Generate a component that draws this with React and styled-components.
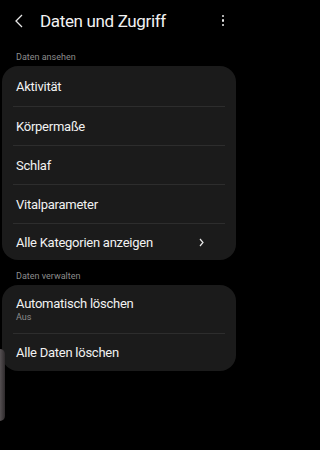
import React from 'react';
import styled, { createGlobalStyle } from 'styled-components';

const GlobalStyle = createGlobalStyle`
  html, body {
    margin: 0;
    padding: 0;
    background: #000;
  }
  body {
    font-family: Roboto, "Noto Sans", "Liberation Sans", sans-serif;
    color: #f2f2f2;
  }
`;

const Screen = styled.div`
  position: relative;
  width: 238px;
  height: 450px;
  overflow: hidden;
  background: #000;
`;

const Header = styled.header`
  display: flex;
  align-items: center;
  height: 41px;
  padding: 0 14px 0 12px;
`;

const BackButton = styled.button`
  display: flex;
  align-items: center;
  justify-content: center;
  width: 14px;
  height: 20px;
  padding: 0;
  margin-right: 14px;
  border: none;
  background: none;
  color: #e8e8e8;
`;

const Title = styled.h1`
  flex: 1;
  margin: 0;
  font-size: 17px;
  font-weight: 400;
  letter-spacing: -0.35px;
  color: #f2f2f2;
`;

const MoreButton = styled.button`
  display: flex;
  flex-direction: column;
  align-items: center;
  gap: 2px;
  padding: 0;
  border: none;
  background: none;
`;

const Dot = styled.span`
  width: 2.5px;
  height: 2.5px;
  border-radius: 50%;
  background: #e8e8e8;
`;

const SectionLabel = styled.div`
  padding: ${(p) => p.$top || 10}px 16px 4px;
  font-size: 9px;
  color: #8c8c8c;
`;

const Card = styled.div`
  margin: 0 2px;
  background: #1b1b1b;
  border-radius: 16px;
  padding: 0 11px;
`;

const Row = styled.div`
  display: flex;
  align-items: center;
  min-height: ${(p) => p.$height || 38}px;
  padding: 0 3px;
  border-top: ${(p) => (p.$first ? 'none' : '1px solid #2d2d2d')};
`;

const RowText = styled.div`
  flex: 1;
  display: flex;
  flex-direction: column;
`;

const RowTitle = styled.span`
  font-size: 13px;
  letter-spacing: -0.25px;
  color: #f2f2f2;
`;

const RowSub = styled.span`
  margin-top: 1px;
  font-size: 9px;
  color: #8c8c8c;
`;

const Chevron = styled.span`
  display: flex;
  margin-right: 18px;
  color: #e8e8e8;
`;

const EdgeHandle = styled.div`
  position: absolute;
  left: 0;
  top: 349px;
  width: 5px;
  height: 72px;
  border-radius: 0 5px 5px 0;
  background: linear-gradient(to right, #555052, #2e2a2c);
`;

const viewItems = ['Aktivität', 'Körpermaße', 'Schlaf', 'Vitalparameter'];

export default function App() {
  return (
    <Screen>
      <GlobalStyle />
      <Header>
        <BackButton aria-label="Zurück">
          <svg width="8" height="14" viewBox="0 0 8 14">
            <path d="M7 1 L1 7 L7 13" fill="none" stroke="currentColor" strokeWidth="1.3" />
          </svg>
        </BackButton>
        <Title>Daten und Zugriff</Title>
        <MoreButton aria-label="Mehr">
          <Dot />
          <Dot />
          <Dot />
        </MoreButton>
      </Header>

      <SectionLabel $top={11}>Daten ansehen</SectionLabel>
      <Card>
        {viewItems.map((item, i) => (
          <Row key={item} $first={i === 0} $height={i === 0 ? 40 : 38}>
            <RowText>
              <RowTitle>{item}</RowTitle>
            </RowText>
          </Row>
        ))}
        <Row $height={36}>
          <RowText>
            <RowTitle>Alle Kategorien anzeigen</RowTitle>
          </RowText>
          <Chevron>
            <svg width="5" height="9" viewBox="0 0 5 9">
              <path d="M1 1 L4 4.5 L1 8" fill="none" stroke="currentColor" strokeWidth="1.2" />
            </svg>
          </Chevron>
        </Row>
      </Card>

      <SectionLabel $top={11}>Daten verwalten</SectionLabel>
      <Card>
        <Row $first $height={48}>
          <RowText>
            <RowTitle>Automatisch löschen</RowTitle>
            <RowSub>Aus</RowSub>
          </RowText>
        </Row>
        <Row $height={37}>
          <RowText>
            <RowTitle>Alle Daten löschen</RowTitle>
          </RowText>
        </Row>
      </Card>

      <EdgeHandle />
    </Screen>
  );
}
